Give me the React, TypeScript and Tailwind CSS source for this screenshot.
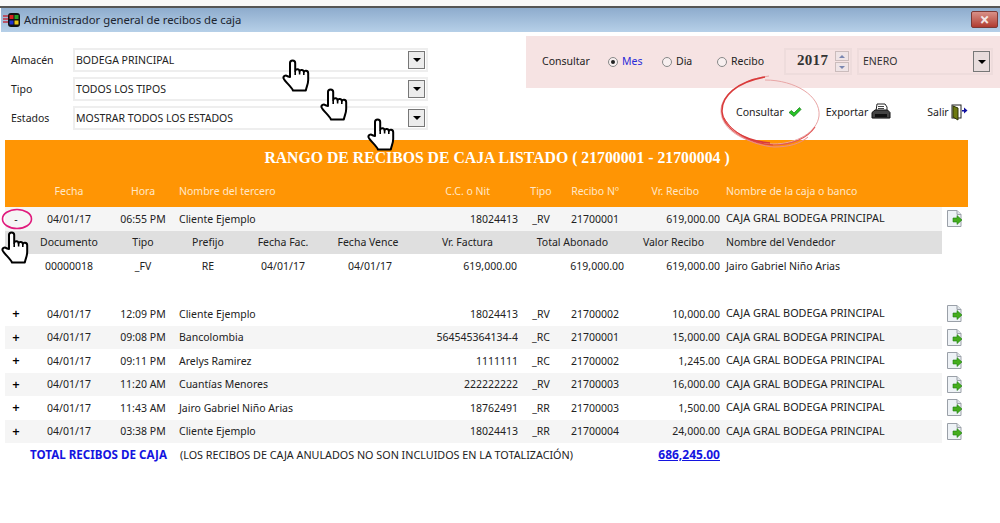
type Row = {
  fecha: string
  hora: string
  nombre: string
  nit: string
  tipo: string
  recibo: string
  valor: string
}

const rows: Row[] = [
  { fecha: '04/01/17', hora: '12:09 PM', nombre: 'Cliente Ejemplo', nit: '18024413', tipo: '_RV', recibo: '21700002', valor: '10,000.00' },
  { fecha: '04/01/17', hora: '09:08 PM', nombre: 'Bancolombia', nit: '564545364134-4', tipo: '_RC', recibo: '21700001', valor: '15,000.00' },
  { fecha: '04/01/17', hora: '09:11 PM', nombre: 'Arelys Ramirez', nit: '1111111', tipo: '_RC', recibo: '21700002', valor: '1,245.00' },
  { fecha: '04/01/17', hora: '11:20 AM', nombre: 'Cuantías Menores', nit: '222222222', tipo: '_RV', recibo: '21700003', valor: '16,000.00' },
  { fecha: '04/01/17', hora: '11:43 AM', nombre: 'Jairo Gabriel Niño Arias', nit: '18762491', tipo: '_RR', recibo: '21700003', valor: '1,500.00' },
  { fecha: '04/01/17', hora: '03:38 PM', nombre: 'Cliente Ejemplo', nit: '18024413', tipo: '_RR', recibo: '21700004', valor: '24,000.00' },
]

const gridCols = 'grid grid-cols-[22px_84px_64px_225px_118px_46px_62px_94px_222px_26px] items-center'
const subCols = 'grid grid-cols-[22px_84px_64px_66px_84px_86px_107px_107px_95px_222px] items-center'

function Hand({ className }: { className: string }) {
  return (
    <svg viewBox="0 0 30 34" className={`absolute h-[34px] w-[30px] ${className}`}>
      <path
        d="M8 18V4a2.6 2.6 0 0 1 5.2 0v8c0-2.4 4.4-2.400 4.400.5 0-2.200 4.200-2.200 4.200.6 0-1.800 4.400-2 4.400 1.200V21c0 4-1.600 6.500-2.400 10.500H11C9 27 3 23 1.600 19.400c-.8-2.200 2-3.800 3.800-2.200Z"
        fill="#fff"
        stroke="#000"
        strokeWidth="2"
        strokeLinejoin="round"
      />
      <path d="M13.200 12v4M17.600 12.500v3M21.800 13v3" stroke="#000" strokeWidth="1.600" fill="none" />
    </svg>
  )
}

function FileArrow() {
  return (
    <svg viewBox="0 0 16 17" className="h-[17px] w-4">
      <path d="M.5 .5h9.500l4 4v12h-13.500Z" fill="#eef2f6" stroke="#9aa0a8" />
      <path d="M10 .5v4h4" fill="#dfe4e8" stroke="#9aa0a8" />
      <path d="M6 8h4V5.500l5 4.500-5 4.500V12H6Z" fill="#45ad1d" stroke="#1c7d10" strokeWidth=".6" />
    </svg>
  )
}

function SelectBox({ label, value }: { label: string; value: string }) {
  return (
    <div className="flex h-6 items-center">
      <span className="w-[73px] pl-[11px] text-[#222]">{label}</span>
      <div className="flex h-6 w-[355px] items-center justify-between border-2 border-[#eeeeee] bg-white pl-[1px] pr-[1px]">
        <span>{value}</span>
        <DropButton />
      </div>
    </div>
  )
}

function DropButton() {
  return (
    <div className="flex h-[18px] w-[17px] items-center justify-center border border-[#777] bg-[#ececec]">
      <span className="h-0 w-0 border-x-[4px] border-t-[4px] border-x-transparent border-t-black" />
    </div>
  )
}

function Radio({ label, checked, className }: { label: string; checked?: boolean; className: string }) {
  return (
    <div className={`flex items-center gap-[4px] ${className}`}>
      <span className="flex h-[10px] w-[10px] items-center justify-center rounded-full border border-[#888] bg-[#f8f0f0]">
        {checked && <span className="h-1 w-1 rounded-full bg-[#222]" />}
      </span>
      <span className={checked ? 'text-[#2b2bd8]' : 'text-[#222]'}>{label}</span>
    </div>
  )
}

export default function App() {
  return (
    <div className="relative h-[523px] w-[1000px] overflow-hidden bg-white font-['Noto_Sans',sans-serif] text-[10.500px] leading-none text-[#222]">
      <div className="h-[6px] bg-[#f8f8f8]" />
      <div className="h-[2px] bg-[#555]" />

      {/* title bar */}
      <div className="ml-[1px] flex h-6 items-center justify-between bg-gradient-to-b from-[#8eaccd] to-[#b6d0e8] pr-[2px]">
        <div className="flex items-center gap-[3px] pl-[2px]">
          <svg viewBox="0 0 18 16" className="h-4 w-[18px]">
            <path d="M0 4h5M0 7h5M0 10h5" stroke="#c03040" strokeWidth="1.500" />
            <rect x="5" y="1" width="12" height="14" rx="3" fill="#111" />
            <rect x="6.500" y="3" width="4" height="4" fill="#d82020" />
            <rect x="11.500" y="3" width="4" height="4" fill="#28a028" />
            <rect x="6.500" y="8.500" width="4" height="4" fill="#2030d0" />
            <rect x="11.500" y="8.500" width="4" height="4" fill="#e8c818" />
          </svg>
          <span className="text-[11.300px] text-[#1c2530]">Administrador general de recibos de caja</span>
        </div>
        <div className="mb-[2px] flex h-[17px] w-[27px] items-center justify-center rounded-[2px] border border-[#7c3a36] bg-gradient-to-b from-[#d89088] to-[#b03a30] text-[17px] font-bold text-[#f4e8e8]">
          ×
        </div>
      </div>

      {/* filters + actions */}
      <div className="flex h-[108px]">
        <div className="flex w-[526px] flex-col gap-[5px] pt-4">
          <SelectBox label="Almacén" value="BODEGA PRINCIPAL" />
          <SelectBox label="Tipo" value="TODOS LOS TIPOS" />
          <SelectBox label="Estados" value="MOSTRAR TODOS LOS ESTADOS" />
        </div>
        <div className="flex-1 pt-1">
          <div className="flex h-[52px] items-center bg-[#f6e3e3] pb-[1px]">
            <span className="ml-[16px] w-[66px]">Consultar</span>
            <Radio label="Mes" checked className="w-[54px]" />
            <Radio label="Dia" className="w-[55px]" />
            <Radio label="Recibo" className="w-[67px]" />
            <div className="flex h-[27px] w-[68px] items-center justify-between border-2 border-[#eedcdc] pl-[11px] pr-[1px]">
              <span className="mb-[2px] font-['Liberation_Serif',serif] text-[15px] font-bold tracking-[0.3px] text-[#333]">2017</span>
              <div className="flex flex-col gap-[1px]">
                <div className="flex h-[10px] w-[14px] items-center justify-center border border-[#cbbcbc] bg-[#efe4e6]">
                  <span className="h-0 w-0 border-x-[3px] border-b-[3px] border-x-transparent border-b-[#7a86b0]" />
                </div>
                <div className="flex h-[10px] w-[14px] items-center justify-center border border-[#cbbcbc] bg-[#efe4e6]">
                  <span className="h-0 w-0 border-x-[3px] border-t-[3px] border-x-transparent border-t-[#7a86b0]" />
                </div>
              </div>
            </div>
            <div className="ml-[5px] flex h-[27px] w-[136px] items-center justify-between border-2 border-[#eedcdc] pl-1 pr-[1px] text-[#333]">
              <span>ENERO</span>
              <div className="flex h-[21px] w-[17px] items-center justify-center border border-[#777] bg-[#e8dcdc]">
                <span className="h-0 w-0 border-x-[4px] border-t-[4px] border-x-transparent border-t-black" />
              </div>
            </div>
          </div>
          <div className="flex h-[48px] items-center">
            <span className="ml-[210px]">Consultar</span>
            <svg viewBox="0 0 14 12" className="ml-[4px] h-3 w-[14px]">
              <path d="M1 6.500 3.500 4.500 6 7 11.500 1.500 13 3.500 6 10.500Z" fill="#27c427" stroke="#127812" strokeWidth=".7" />
            </svg>
            <span className="ml-[24px]">Exportar</span>
            <svg viewBox="0 0 20 18" className="ml-[3px] h-[18px] w-5">
              <path d="M6 1h8l2 3v4H5Z" fill="#fff" stroke="#222" />
              <path d="M7 3.500h6M7 5.500h6" stroke="#444" />
              <path d="M1 9.500 4 7h12.500L19 9.500V15H1Z" fill="#444" stroke="#111" />
              <rect x="4" y="11" width="12" height="3" fill="#111" />
              <path d="M2 15.500h16" stroke="#777" />
            </svg>
            <span className="ml-[36px]">Salir</span>
            <svg viewBox="0 0 17 17" className="ml-[2px] h-[17px] w-[17px]">
              <rect x="1" y="1" width="9" height="13" fill="#fff" stroke="#222" />
              <path d="M2 2 7 4v12l-5-3Z" fill="#6e7a10" stroke="#2c3406" />
              <path d="M11 6h2V3.500L16.500 6.500 13 9.500V7.500h-2Z" fill="#1010a0" />
            </svg>
          </div>
        </div>
      </div>

      {/* table */}
      <div className="ml-[5px] w-[963px]">
        <div className="h-[67px] bg-[#ff9504] text-[#ffe8c8]">
          <div className="flex h-[35px] items-center justify-center pl-[21px] pt-[1px] font-['Liberation_Serif',serif] text-[15.750px] font-bold whitespace-nowrap text-white">
            RANGO DE RECIBOS DE CAJA LISTADO ( 21700001 - 21700004 )
          </div>
          <div className={`${gridCols} h-[32px]`}>
            <span />
            <span className="text-center">Fecha</span>
            <span className="text-center">Hora</span>
            <span className="pl-1">Nombre del tercero</span>
            <span className="pr-[28px] text-right">C.C. o Nit</span>
            <span className="text-center">Tipo</span>
            <span className="text-center">Recibo Nº</span>
            <span className="pr-[21px] text-right">Vr. Recibo</span>
            <span className="pl-[6px]">Nombre de la caja o banco</span>
            <span />
          </div>
        </div>

        <div className={`${gridCols} h-[23.500px]`}>
          <span className="flex h-full items-center justify-center bg-[#f5f5f5]">-</span>
          <span className="flex h-full items-center justify-center bg-[#f5f5f5]">04/01/17</span>
          <span className="flex h-full items-center justify-center bg-[#f5f5f5]">06:55 PM</span>
          <span className="flex h-full items-center bg-[#f5f5f5] pl-1">Cliente Ejemplo</span>
          <span className="flex h-full items-center justify-end bg-[#f5f5f5]">18024413</span>
          <span className="flex h-full items-center justify-center bg-[#f5f5f5]">_RV</span>
          <span className="flex h-full items-center justify-center bg-[#f5f5f5]">21700001</span>
          <span className="flex h-full items-center justify-end bg-[#f5f5f5]">619,000.00</span>
          <span className="flex h-full items-center bg-[#f5f5f5] pl-[6px] text-[10.850px]">CAJA GRAL BODEGA PRINCIPAL</span>
          <span className="flex justify-end pr-[5px]"><FileArrow /></span>
        </div>

        <div className={`${subCols} h-[23.500px] w-[937px] bg-[#dfdfdf]`}>
          <span />
          <span className="text-center">Documento</span>
          <span className="text-center">Tipo</span>
          <span className="text-center">Prefijo</span>
          <span className="text-center">Fecha Fac.</span>
          <span className="text-center">Fecha Vence</span>
          <span className="pr-[25px] text-right">Vr. Factura</span>
          <span className="pr-[17px] text-right">Total Abonado</span>
          <span className="pr-[16px] text-right">Valor Recibo</span>
          <span className="pl-[6px]">Nombre del Vendedor</span>
        </div>
        <div className={`${subCols} h-6 w-[937px]`}>
          <span />
          <span className="text-center">00000018</span>
          <span className="text-center">_FV</span>
          <span className="text-center">RE</span>
          <span className="text-center">04/01/17</span>
          <span className="pl-1 text-center">04/01/17</span>
          <span className="pr-[1px] text-right">619,000.00</span>
          <span className="pr-[1px] text-right">619,000.00</span>
          <span className="text-right">619,000.00</span>
          <span className="pl-[6px]">Jairo Gabriel Niño Arias</span>
        </div>
        <div className="h-6" />

        {rows.map((row, i) => (
          <div key={i} className={`${gridCols} h-[23.500px]`}>
            {[
              <span className="text-center text-[13px] font-semibold text-black">+</span>,
              <span className="text-center">{row.fecha}</span>,
              <span className="text-center">{row.hora}</span>,
              <span className="pl-1">{row.nombre}</span>,
              <span className="text-right">{row.nit}</span>,
              <span className="text-center">{row.tipo}</span>,
              <span className="text-center">{row.recibo}</span>,
              <span className="text-right">{row.valor}</span>,
              <span className="pl-[6px] text-[10.850px]">CAJA GRAL BODEGA PRINCIPAL</span>,
            ].map((cell, c) => (
              <div key={c} className={`flex h-full flex-col justify-center ${i % 2 === 1 ? 'bg-[#f5f5f5]' : ''}`}>
                {cell}
              </div>
            ))}
            <span className="flex justify-end pr-[5px]"><FileArrow /></span>
          </div>
        ))}

        <div className={`${gridCols} h-6`}>
          <span className="col-span-3 whitespace-nowrap pl-[25px] text-[11.600px] font-bold text-[#1414e0]">TOTAL RECIBOS DE CAJA</span>
          <span className="col-span-4 whitespace-nowrap pl-[5px] text-[10.780px]">(LOS RECIBOS DE CAJA ANULADOS NO SON INCLUIDOS EN LA TOTALIZACIÓN)</span>
          <span className="col-start-8 text-right text-[12px] font-bold text-[#1414e0] underline">686,245.00</span>
        </div>
      </div>

      {/* annotations */}
      <svg viewBox="0 0 104 74" fill="none" className="absolute left-[719px] top-[74px] h-[74px] w-[104px]">
        <path d="M50 2C20 6 1 22 2 38c1 18 24 32 52 32 24 0 44-12 46-28C102 22 76 6 46 6" stroke="#e9a6a6" strokeWidth="1" />
        <path d="M46 3C18 8 2 22 3 38c1 16 22 29 48 31" stroke="#d93a3a" strokeWidth="1.600" />
        <path d="M4 42c5 15 24 27 50 29 18 0 34-6 42-18" stroke="#e25555" strokeWidth="1.200" />
        <path d="M7 47c8 14 26 24 48 26 14 0 26-3 34-10" stroke="#ec8b8b" strokeWidth="1" />
        <path d="M5 44c8 14 26 25 49 27" stroke="#d93a3a" strokeWidth=".8" />
      </svg>
      <svg viewBox="0 0 32 22" fill="none" className="absolute left-[1px] top-[208px] h-[22px] w-8">
        <ellipse cx="16" cy="11" rx="14.500" ry="9.500" stroke="#e01a7c" strokeWidth="1.600" />
      </svg>
      <Hand className="left-[282px] top-[59px]" />
      <Hand className="left-[320px] top-[88px]" />
      <Hand className="left-[367px] top-[118px]" />
      <Hand className="left-[1px] top-[231px]" />
    </div>
  )
}
